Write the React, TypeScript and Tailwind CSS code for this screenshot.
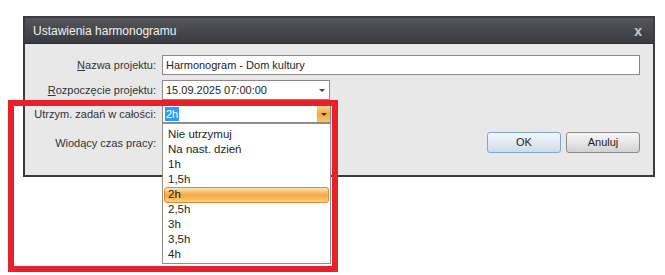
import React from "react";

const items = ["Nie utrzymuj", "Na nast. dzień", "1h", "1,5h", "2h", "2,5h", "3h", "3,5h", "4h"];

export default function App() {
  return (
    <div
      className="relative w-[665px] h-[275px] bg-white pt-[16px] pl-[23px] text-[11px] text-[#1e1e1e]"
      style={{ fontFamily: '"Liberation Sans", Arial, sans-serif' }}
    >
      <div className="w-[632px] border-2 border-[#3b3c40] bg-[#e8e8e8]">
        <div className="h-[26px] flex items-center justify-between pl-[8px] pr-[11px] bg-gradient-to-b from-[#55565b] to-[#3a3b40] border-b border-[#2c2d30]">
          <span className="text-[12px] text-[#f2f2f2]">Ustawienia harmonogramu</span>
          <span className="text-[14px] font-bold text-[#c9c9cc] leading-none">x</span>
        </div>
        <div className="h-[131px] pt-[11px] pr-[13px] grid grid-cols-[131px_1fr] gap-x-[6px] content-start whitespace-nowrap">
          <div className="h-[20px] flex items-center justify-end text-[#333]">
            <span><span className="underline">N</span>azwa projektu:</span>
          </div>
          <div className="h-[20px] border border-[#8a8a8a] bg-white flex items-center pl-[3px]">
            Harmonogram - Dom kultury
          </div>

          <div className="h-[20px] mt-[5px] flex items-center justify-end text-[#333]">
            <span><span className="underline">R</span>ozpoczęcie projektu:</span>
          </div>
          <div className="h-[20px] mt-[5px] w-[168px] border border-[#8a8a8a] bg-white flex items-center justify-between pl-[3px] pr-[4px]">
            <span>15.09.2025 07:00:00</span>
            <span className="w-0 h-0 border-l-[3px] border-r-[3px] border-t-[3px] border-l-transparent border-r-transparent border-t-[#444]" />
          </div>

          <div className="h-[18px] mt-[5px] flex items-center justify-end text-[#333]">
            Utrzym. zadań w całości:
          </div>
          <div className="relative h-[18px] mt-[5px] w-[169px] border border-[#8a8a8a] bg-white flex items-center justify-between pl-[2px]">
            <span className="bg-[#3399ff] text-white leading-[14px] px-[1px]">2h</span>
            <span className="h-full w-[13px] flex items-center justify-center bg-gradient-to-b from-[#fbd48a] via-[#f5a83a] to-[#f9c56e]">
              <span className="w-0 h-0 border-l-[3px] border-r-[3px] border-t-[3px] border-l-transparent border-r-transparent border-t-[#333]" />
            </span>
            <div className="absolute left-[-1px] top-[17px] w-[169px] h-[141px] border border-[#8f8f8f] bg-white pt-[3px] px-[1px] z-10 text-[11.5px]">
              {items.map((t) =>
                t === "2h" ? (
                  <div
                    key={t}
                    className="h-[16px] -my-[0.5px] flex items-center pl-[3px] rounded-[3px] border border-[#e48a26] bg-gradient-to-b from-[#fde5ad] via-[#f7a640] to-[#fbd089]"
                  >
                    {t}
                  </div>
                ) : (
                  <div key={t} className="h-[15px] flex items-center pl-[4px]">
                    {t}
                  </div>
                )
              )}
            </div>
          </div>

          <div className="mt-[12px] flex justify-end text-[#333]">Wiodący czas pracy:</div>
          <div className="mt-[9px] flex justify-end gap-[5px]">
            <button className="w-[74px] h-[21px] border border-[#7aa7d4] rounded-[3px] bg-gradient-to-b from-[#f4f8fc] via-[#e3ebf3] to-[#cfdbe8] text-[11px]">
              OK
            </button>
            <button className="w-[74px] h-[21px] border border-[#8c8c8c] rounded-[3px] bg-gradient-to-b from-[#f6f6f6] via-[#e6e6e6] to-[#d2d2d2] text-[11px]">
              Anuluj
            </button>
          </div>
        </div>
      </div>
      <div className="absolute left-[8px] top-[100px] w-[330px] h-[172px] border-[6px] border-[#e8202a] z-20 pointer-events-none" />
    </div>
  );
}
